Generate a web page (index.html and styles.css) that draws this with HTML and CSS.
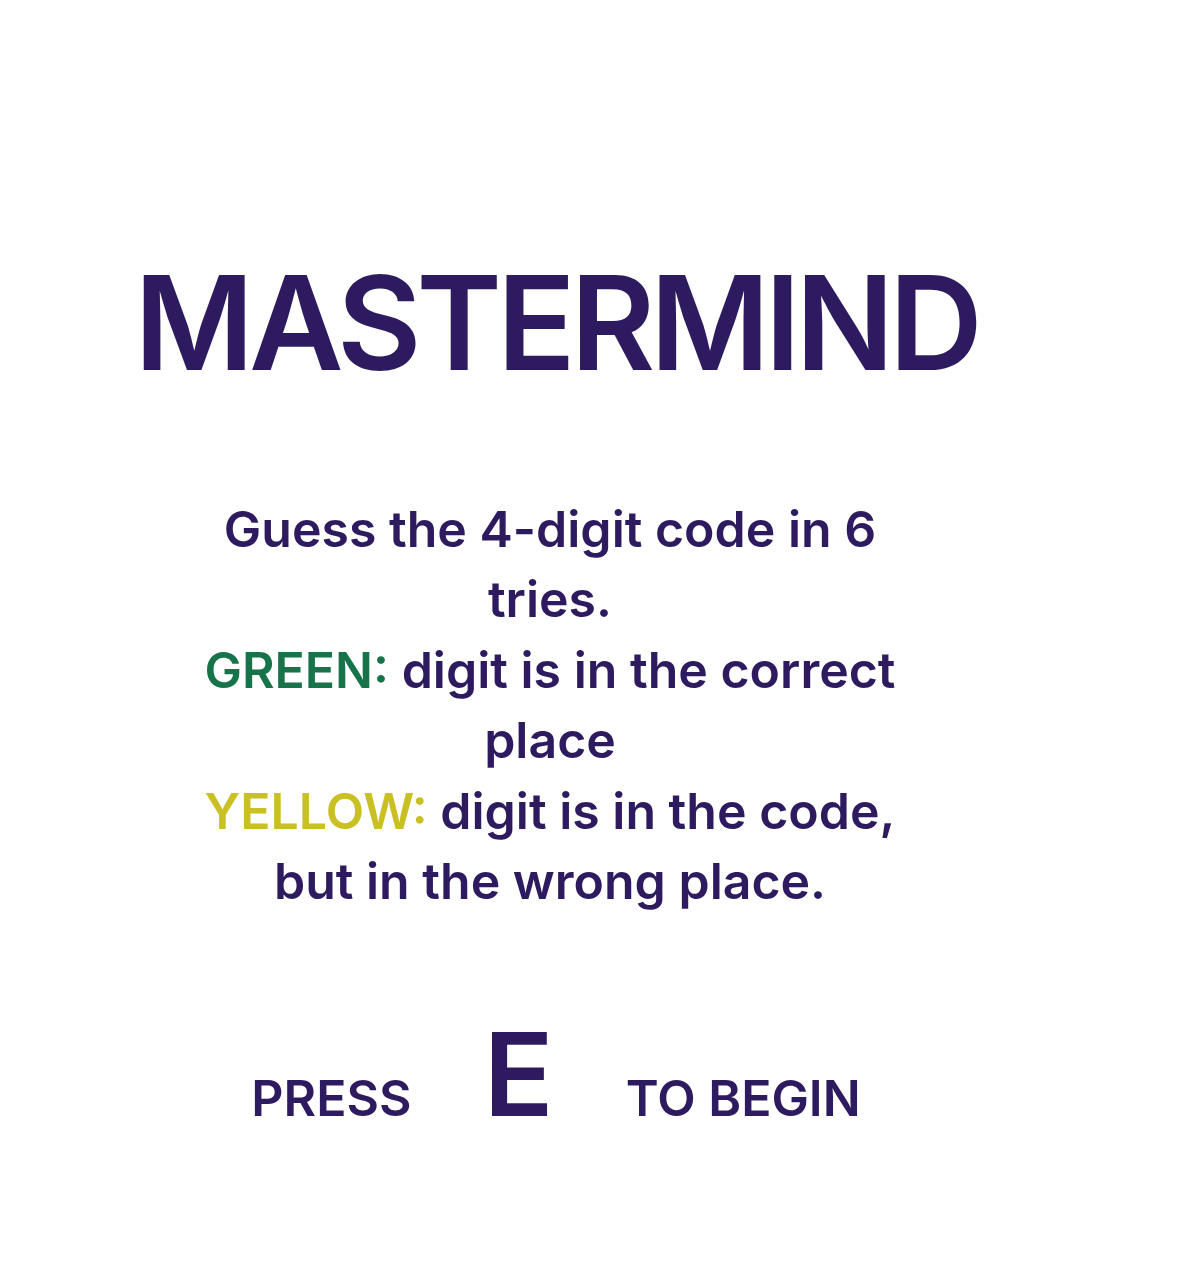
FILE: index.html
```html
<!DOCTYPE html>
<html>
<head>
<meta charset="utf-8">
<link rel="stylesheet" href="styles.css">
</head>
<body>
<main class="screen">
  <h1 class="title">MASTERMIND</h1>
  <p class="rules">Guess the 4-digit code in 6 tries.<br><span class="green">GREEN:</span> digit is in the correct place<br><span class="yellow">YELLOW:</span> digit is in the code, but in the wrong place.</p>
  <div class="start">
    <span class="word">PRESS</span>
    <span class="key">E</span>
    <span class="word">TO BEGIN</span>
  </div>
</main>
</body>
</html>
```
FILE: styles.css
```css
html, body {
  margin: 0;
  padding: 0;
  background: #ffffff;
}
body {
  font-family: Inter, "Noto Sans", sans-serif;
  color: #2e1a5f;
}
.screen {
  width: 1100px;
  display: flex;
  flex-direction: column;
  align-items: center;
  padding-top: 248px;
}
.title {
  margin: 0 0 0 12px;
  font-size: 130px;
  font-weight: 600;
  line-height: 150px;
  letter-spacing: -5.2px;
}
.rules {
  margin: 96px 0 0;
  width: 720px;
  text-align: center;
  font-size: 50px;
  font-weight: 600;
  line-height: 70.4px;
}
.green { color: #17744a; }
.yellow { color: #c9c023; }
.start {
  margin: 88px 0 0 12px;
  display: flex;
  align-items: baseline;
  gap: 72px;
}
.word {
  font-size: 50px;
  font-weight: 600;
}
.key {
  font-size: 116px;
  font-weight: 600;
}
```
